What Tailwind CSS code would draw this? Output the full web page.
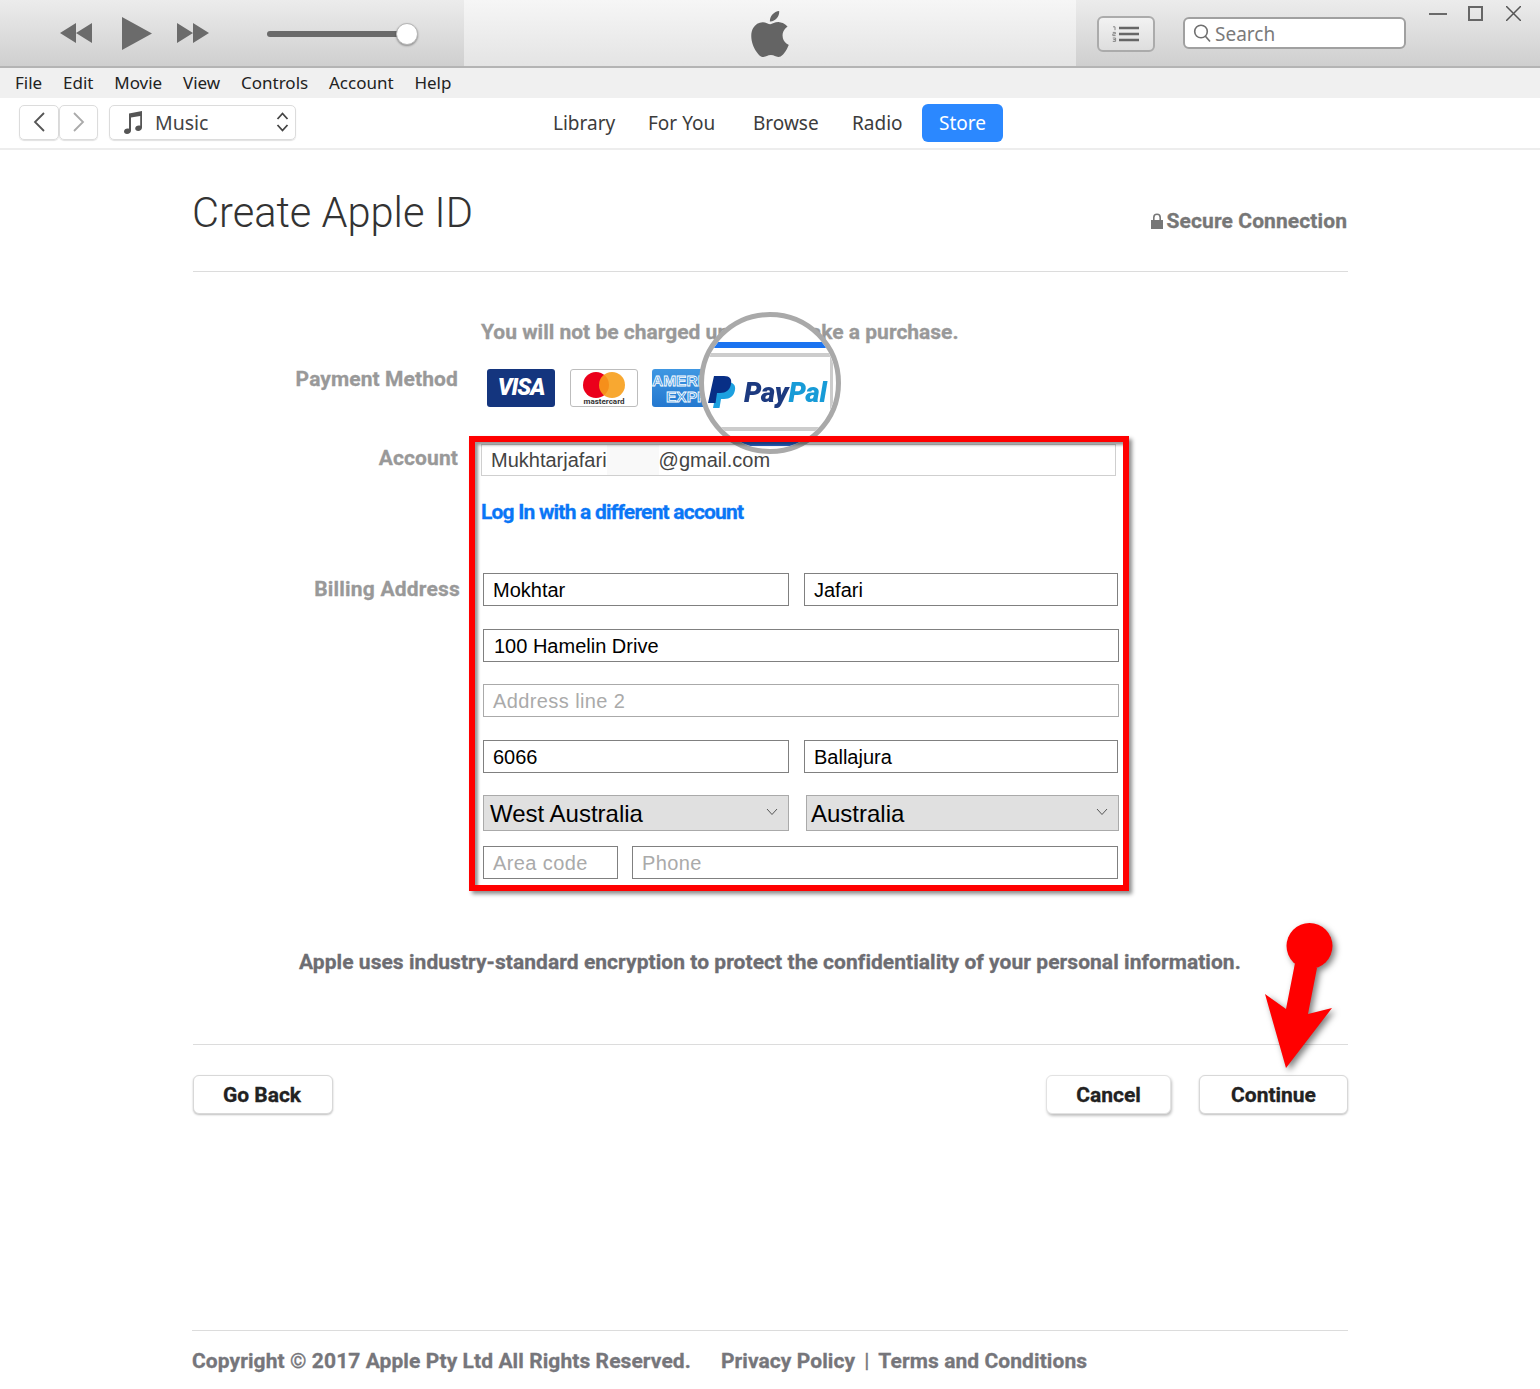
<!DOCTYPE html>
<html lang="en">
<head>
    <meta charset="UTF-8">
    <title>Create Apple ID</title>
    <script src="https://cdn.jsdelivr.net/npm/@tailwindcss/browser@4"></script>
</head>
<body class="bg-white font-['Roboto',sans-serif]">
<div class="relative w-[1540px] h-[1389px] overflow-hidden">

    <!-- Player toolbar -->
    <div class="flex h-[68px] border-b-2 border-[#b4b4b4]">
        <div class="w-[464px] flex items-center pl-[60px] bg-gradient-to-b from-[#ececec] to-[#cfcfcf]">
            <svg class="w-[32px] h-[20px]" viewBox="0 0 32 20"><path fill="#6b6b6b" d="M0 10 16 0V20ZM16 10 32 0V20Z"/></svg>
            <svg class="ml-[30px] w-[30px] h-[33px]" viewBox="0 0 30 33"><path fill="#6b6b6b" d="M0 0 30 16.5 0 33Z"/></svg>
            <svg class="ml-[25px] w-[32px] h-[20px]" viewBox="0 0 32 20"><path fill="#6b6b6b" d="M0 0 16 10 0 20ZM16 0 32 10 16 20Z"/></svg>
            <div class="ml-[58px] mt-[2px] w-[133px] h-[6px] rounded-full bg-[#6a6a6a]"></div>
            <div class="-ml-[4px] mt-[2px] w-[22px] h-[22px] rounded-full bg-white border border-[#b5b5b5] shadow-[0_1px_2px_rgba(0,0,0,0.35)]"></div>
        </div>
        <div class="w-[612px] flex items-center justify-center bg-gradient-to-b from-[#f6f6f6] to-[#e4e4e4]">
            <svg class="w-[46px] h-[46px] mt-[2px]" viewBox="0 0 24 24"><path fill="#646464" d="M12.152 6.896c-.948 0-2.415-1.078-3.96-1.04-2.04.027-3.91 1.183-4.961 3.014-2.117 3.675-.546 9.103 1.519 12.09 1.013 1.454 2.208 3.09 3.792 3.039 1.52-.065 2.09-.987 3.935-.987 1.831 0 2.35.987 3.96.948 1.637-.026 2.676-1.48 3.676-2.948 1.156-1.688 1.636-3.325 1.662-3.415-.039-.013-3.182-1.221-3.22-4.857-.026-3.04 2.48-4.494 2.597-4.559-1.429-2.09-3.623-2.324-4.39-2.376-2-.156-3.675 1.09-4.61 1.09zM15.53 3.83c.843-1.012 1.4-2.427 1.245-3.83-1.207.052-2.662.805-3.532 1.818-.78.896-1.454 2.338-1.273 3.714 1.338.104 2.715-.688 3.559-1.701"/></svg>
        </div>
        <div class="flex-1 flex items-start pl-[21px] bg-gradient-to-b from-[#ececec] to-[#cfcfcf]">
            <div class="mt-[16px] w-[58px] h-[36px] flex items-center justify-center rounded-[6px] border-2 border-[#ababab] bg-gradient-to-b from-[#f2f2f2] to-[#dedede]">
                <svg class="w-[28px] h-[16px]" viewBox="0 0 28 16">
                    <path fill="#666" d="M7 .8h20v2.400H7zM7 6.800h20v2.400H7zM7 12.800h20v2.400H7z"/>
                    <path stroke="#888" stroke-width="1" fill="none" d="M1 .8h2v3.400M.8 6.400h2.600v1.500H.8v1.700h2.800M.8 12h2.800v1.600H1.600 3.600v1.800H.8"/>
                </svg>
            </div>
            <div class="ml-[28px] mt-[17px] w-[223px] h-[32px] flex items-center pl-[8px] gap-[4px] rounded-[6px] border-2 border-[#a0a0a0] bg-white">
                <svg class="w-[18px] h-[20px]" viewBox="0 0 18 20" fill="none" stroke="#6f6f6f" stroke-width="1.6"><circle cx="8" cy="8.5" r="6.3"/><path d="M12.4 13.2 17 18.6"/></svg>
                <span class="mt-[2px] font-['Noto_Sans',sans-serif] text-[19px] text-[#7a7a7a] leading-none">Search</span>
            </div>
            <div class="ml-[23px] mt-[13px] w-[18px] h-[2px] bg-[#6a6a6a]"></div>
            <div class="ml-[21px] mt-[6px] w-[15px] h-[15px] border-2 border-[#666]"></div>
            <svg class="ml-[23px] mt-[6px] w-[15px] h-[15px]" viewBox="0 0 15 15" stroke="#555" stroke-width="1.5"><path d="M0 0 15 15M15 0 0 15"/></svg>
        </div>
    </div>

    <!-- Menu bar -->
    <div class="h-[30px] bg-[#f0f0f0] flex items-center pl-[15px] gap-[20.8px] font-['Noto_Sans',sans-serif] text-[17px] text-[#222]">
        <span>File</span><span>Edit</span><span>Movie</span><span>View</span><span>Controls</span><span>Account</span><span>Help</span>
    </div>

    <!-- Navigation bar -->
    <div class="h-[52px] border-b-2 border-[#ededed] flex items-center pl-[19px] font-['Noto_Sans',sans-serif] text-[19px] text-[#3c3c3c]">
        <div class="mb-[2px] w-[40px] h-[35px] flex items-center justify-center rounded-[5px] border border-[#dcdcdc] shadow-[0_1px_1px_rgba(0,0,0,0.12)]">
            <svg class="w-[12px] h-[20px]" viewBox="0 0 12 20" fill="none" stroke="#555" stroke-width="1.8"><path d="M11 1 2 10l9 9"/></svg>
        </div>
        <div class="mb-[2px] w-[39px] h-[35px] flex items-center justify-center rounded-[5px] border border-[#dcdcdc] shadow-[0_1px_1px_rgba(0,0,0,0.12)]">
            <svg class="w-[12px] h-[20px]" viewBox="0 0 12 20" fill="none" stroke="#aaa" stroke-width="1.8"><path d="M1 1l9 9-9 9"/></svg>
        </div>
        <div class="mb-[2px] ml-[11px] w-[187px] h-[35px] flex items-center pl-[12px] rounded-[5px] border border-[#dcdcdc] shadow-[0_1px_1px_rgba(0,0,0,0.12)]">
            <svg class="w-[22px] h-[24px]" viewBox="0 0 22 24"><path fill="#555" d="M7 3.5 20 1v16.5c0 2-1.8 3.5-3.8 3.5-1.8 0-3-1-3-2.5 0-1.800 1.700-3 3.600-3 .6 0 1.100.1 1.400.3V6L9 7.600V20.500C9 22.500 7.200 24 5 24c-1.800 0-3-1-3-2.500 0-1.800 1.700-3 3.500-3 .6 0 1.100.1 1.500.3Z"/></svg>
            <span class="ml-[11px] mt-[2px] text-[19.5px] text-[#444]">Music</span>
            <svg class="ml-auto mr-[6px] w-[13px] h-[22px]" viewBox="0 0 13 22" fill="none" stroke="#444" stroke-width="1.8"><path d="M1.500 8 6.500 2.500 11.500 8M1.500 14l5 5.500 5-5.500"/></svg>
        </div>
        <span class="ml-[257px] w-[95px]">Library</span>
        <span class="w-[105px]">For You</span>
        <span class="w-[99px]">Browse</span>
        <span class="w-[70px]">Radio</span>
        <span class="w-[81px] h-[38px] flex items-center justify-center rounded-[6px] bg-[#2b88ff] text-white">Store</span>
    </div>

    <!-- Page content -->
    <main class="ml-[193px] w-[1155px]">
        <div class="h-[122px] border-b border-[#dcdcdc] flex justify-between items-start pt-[42px]">
            <h1 class="font-light text-[41.6px] text-[#333] leading-none -ml-[1px]">Create Apple ID</h1>
            <div class="flex items-center gap-[4px] mt-[17px] mr-[1px] font-bold text-[21px] text-[#777] tracking-[0.1px] leading-[24px] [-webkit-text-stroke:0.3px]">
                <svg class="w-[12px] h-[16px]" viewBox="0 0 12 16"><path fill="#777" d="M0 7h12v9H0zM2 7V4.500a4 4 0 0 1 8 0V7H8.400V4.500a2.400 2.400 0 0 0-4.800 0V7Z"/></svg>
                <span>Secure Connection</span>
            </div>
        </div>

        <form class="grid grid-cols-[265px_1fr] gap-x-[23px]">
            <p class="col-start-2 mt-[48px] font-bold text-[21px] leading-[24px] text-[#999] [-webkit-text-stroke:0.3px]">You will not be charged until you make a purchase.</p>

            <label class="mt-[25px] col-start-1 text-right font-bold text-[21px] leading-[20px] text-[#999] tracking-[0.1px] [-webkit-text-stroke:0.3px]">Payment Method</label>
            <div class="mt-[25px] flex pl-[6px] gap-[15px] h-[38px]">
                <div class="w-[68px] rounded-[3px] bg-[#14357e] flex items-center justify-center text-white italic font-black text-[23px] tracking-[-1px]">VISA</div>
                <div class="w-[68px] rounded-[3px] border border-[#bdbdbd] flex flex-col items-center">
                    <div class="flex mt-[2px]">
                        <div class="w-[26px] h-[26px] rounded-full bg-[#eb001b]"></div>
                        <div class="-ml-[10px] w-[26px] h-[26px] rounded-full bg-[#f79e1b]/90"></div>
                    </div>
                    <span class="text-[8px] font-bold text-[#333] leading-[8px]">mastercard</span>
                </div>
                <div class="-ml-[1px] w-[68px] rounded-[3px] bg-gradient-to-b from-[#3f97e2] to-[#2478cf] flex flex-col pt-[4px] text-[#3f97e2] [-webkit-text-stroke:0.8px_white] font-['Liberation_Sans',sans-serif] font-bold text-[15.5px] leading-[16px] whitespace-nowrap">
                    <span>AMERICAN</span>
                    <span class="pl-[14px]">EXPRESS</span>
                </div>
            </div>

            <label class="mt-[39px] col-start-1 text-right font-bold text-[21px] leading-[24px] text-[#999] tracking-[0.1px] [-webkit-text-stroke:0.3px]">Account</label>
            <div class="mt-[37px] w-[635px] h-[32px] border border-[#cfcfcf] flex items-center pl-[9px] font-['Liberation_Sans',sans-serif] text-[20px] text-[#444]">
                <span>Mukhtarjafari</span><span class="w-[52px] h-full bg-[#f9f9f9]"></span><span>@gmail.com</span>
            </div>

            <a class="col-start-2 mt-[24px] font-bold text-[21px] leading-[24px] text-[#0a76f6] tracking-[-0.8px] [-webkit-text-stroke:0.3px]">Log In with a different account</a>

            <label class="col-start-1 mt-[53px] text-right font-bold text-[21px] leading-[24px] text-[#999] tracking-[0.2px] [-webkit-text-stroke:0.3px] -mr-[2px]">Billing Address</label>
            <div class="mt-[49px] row-span-6 pl-[2px] w-[638px] flex flex-col font-['Liberation_Sans',sans-serif] text-[20px] text-black">
                <div class="flex justify-between">
                    <div class="w-[306px] h-[33px] border border-[#808080] flex items-center pl-[9px]">Mokhtar</div>
                    <div class="w-[314px] h-[33px] border border-[#808080] flex items-center pl-[9px] mr-[1px]">Jafari</div>
                </div>
                <div class="mt-[23px] h-[33px] border border-[#808080] flex items-center pl-[10px]">100 Hamelin Drive</div>
                <div class="mt-[22px] h-[33px] border border-[#aaa] flex items-center pl-[9px] text-[#aaa] tracking-[0.4px]">Address line 2</div>
                <div class="mt-[23px] flex justify-between">
                    <div class="w-[306px] h-[33px] border border-[#808080] flex items-center pl-[9px]">6066</div>
                    <div class="w-[314px] h-[33px] border border-[#808080] flex items-center pl-[9px] mr-[1px]">Ballajura</div>
                </div>
                <div class="mt-[22px] flex justify-between text-[24px]">
                    <div class="w-[306px] h-[36px] border border-[#aaa] bg-[#e0e0e0] flex items-center pl-[6px] pt-[2px]">
                        West Australia
                        <svg class="ml-auto mr-[10px] mb-[4px] w-[12px] h-[8px]" viewBox="0 0 12 8" fill="none" stroke="#555" stroke-width="1"><path d="M1 1l5 5.500L11 1"/></svg>
                    </div>
                    <div class="w-[313px] h-[36px] border border-[#aaa] bg-[#e0e0e0] flex items-center pl-[4px] pt-[2px]">
                        Australia
                        <svg class="ml-auto mr-[10px] mb-[4px] w-[12px] h-[8px]" viewBox="0 0 12 8" fill="none" stroke="#555" stroke-width="1"><path d="M1 1l5 5.500L11 1"/></svg>
                    </div>
                </div>
                <div class="mt-[15px] flex gap-[14px] text-[#aaa] tracking-[0.4px]">
                    <div class="w-[135px] h-[33px] border border-[#808080] flex items-center pl-[9px]">Area code</div>
                    <div class="w-[486px] h-[33px] border border-[#808080] flex items-center pl-[9px]">Phone</div>
                </div>
            </div>
        </form>

        <p class="mt-[71px] ml-[106px] font-bold text-[21px] leading-[24px] text-[#6d6d72] tracking-[0.05px] [-webkit-text-stroke:0.3px] whitespace-nowrap">Apple uses industry-standard encryption to protect the confidentiality of your personal information.</p>

        <div class="mt-[70px] border-t border-[#dcdcdc] pt-[30px] flex font-bold text-[21px] text-[#222] [-webkit-text-stroke:0.3px]">
            <button class="w-[140px] h-[39px] pt-[2px] pr-[2px] rounded-[6px] border border-[#d8d8d8] bg-white shadow-[0_1px_2px_rgba(0,0,0,0.25)]">Go Back</button>
            <button class="ml-auto w-[125px] h-[39px] pt-[2px] rounded-[6px] border border-[#e2e2e2] bg-white shadow-[1px_2px_3px_rgba(0,0,0,0.25)]">Cancel</button>
            <button class="ml-[28px] w-[149px] h-[39px] pt-[2px] rounded-[6px] border border-[#d8d8d8] bg-white shadow-[0_1px_2px_rgba(0,0,0,0.25)]">Continue</button>
        </div>

        <div class="mt-[216px] border-t border-[#dcdcdc] pt-[18px] flex font-bold text-[21px] leading-[24px] text-[#76767b] tracking-[0.08px] [-webkit-text-stroke:0.3px] -ml-[1px]">
            <span>Copyright © 2017 Apple Pty Ltd All Rights Reserved.</span>
            <span class="ml-[30px]">Privacy Policy</span>
            <span class="ml-[9px] font-normal">|</span>
            <span class="ml-[9px]">Terms and Conditions</span>
        </div>
    </main>

    <!-- Magnifier over the PayPal card -->
    <div class="absolute left-[699px] top-[312px] w-[142px] h-[142px] rounded-full border-[5px] border-[#a9a9a9] bg-white overflow-hidden">
        <div class="absolute left-0 right-0 top-[25px] h-[6px] bg-[#1a73f0] blur-[0.4px]"></div>
        <div class="absolute left-0 right-[3px] top-[36px] h-[78px] border-y-[4px] border-r-[3px] border-[#cccccc] blur-[0.6px]"></div>
        <div class="absolute left-[4px] top-[59px] flex items-center blur-[0.5px]">
            <svg class="w-[28px] h-[33px]" viewBox="0 0 28 33">
                <path fill="#1ca0e0" d="M10 6h9c6 0 9 3 8 8-1 6-5 9-11 9h-3l-1.500 9H5Z"/>
                <path fill="#082f86" d="M6 0h10c6 0 8 3 7 8-1 6-5 9-11 9H9l-1.500 10H0Z"/>
            </svg>
            <span class="ml-[8px] italic font-black text-[27.5px] leading-none tracking-[-0.2px] text-[#1c3a80]">Pay<span class="text-[#179bd7]">Pal</span></span>
        </div>
        <div class="absolute left-0 right-0 top-[125px] h-[4px] bg-[#2a62c8]"></div>
    </div>

    <!-- Red highlight frame -->
    <div class="absolute left-[469px] top-[436px] w-[660px] h-[455px] border-[6px] border-[#ff0000] shadow-[3px_3px_4px_rgba(0,0,0,0.45),inset_3px_3px_3px_rgba(0,0,0,0.4)] pointer-events-none"></div>

    <!-- Red arrow pointing at Continue -->
    <svg class="absolute left-[1260px] top-[918px] w-[85px] h-[155px] drop-shadow-[3px_3px_3px_rgba(0,0,0,0.5)]" viewBox="1260 918 85 155">
        <path fill="#ff0000" d="M1295 963 1286 1009 1265 994 1286 1068 1332 1008 1308 1014 1317 968Z"/>
        <circle cx="1309.500" cy="946" r="23" fill="#ff0000"/>
    </svg>
</div>
</body>
</html>
